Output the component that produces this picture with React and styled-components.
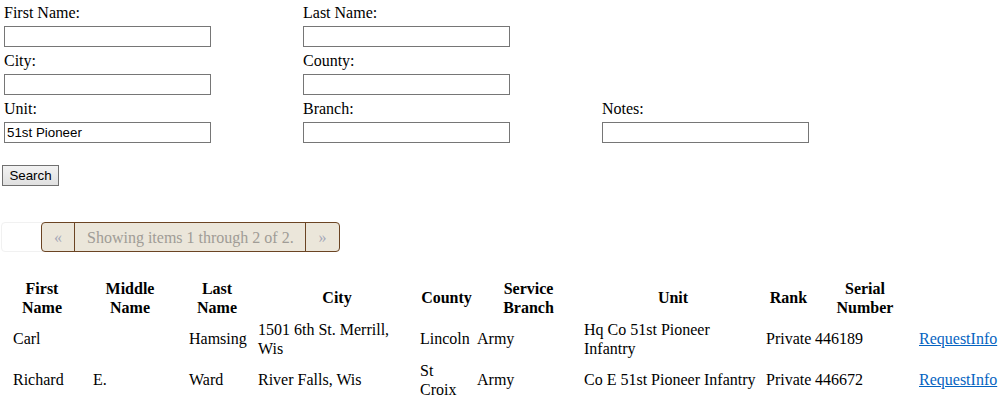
import React, { useState } from "react";
import styled, { createGlobalStyle } from "styled-components";

const GlobalStyle = createGlobalStyle`
  body {
    margin: 0;
    background: #fff;
    color: #000;
    font-family: "Liberation Serif", "Times New Roman", serif;
    font-size: 16px;
  }
`;

const columns = [
  { title: ["First", "Name"], width: 80 },
  { title: ["Middle", "Name"], width: 96 },
  { title: ["Last", "Name"], width: 78 },
  { title: ["City"], width: 162 },
  { title: ["County"], width: 57 },
  { title: ["Service", "Branch"], width: 107 },
  { title: ["Unit"], width: 182 },
  { title: ["Rank"], width: 49 },
  { title: ["Serial", "Number"], width: 104 },
  { title: [], width: 82 },
];

const soldiers = [
  {
    first: "Carl",
    middle: "",
    last: "Hamsing",
    city: "1501 6th St. Merrill, Wis",
    county: "Lincoln",
    branch: "Army",
    unit: "Hq Co 51st Pioneer Infantry",
    rank: "Private",
    serial: "446189",
  },
  {
    first: "Richard",
    middle: "E.",
    last: "Ward",
    city: "River Falls, Wis",
    county: "St Croix",
    branch: "Army",
    unit: "Co E 51st Pioneer Infantry",
    rank: "Private",
    serial: "446672",
  },
];

export default function App() {
  const [fields, setFields] = useState({
    first: "",
    last: "",
    city: "",
    county: "",
    unit: "51st Pioneer",
    branch: "",
    notes: "",
  });
  const update = (key) => (e) => setFields({ ...fields, [key]: e.target.value });

  return (
    <Page>
      <GlobalStyle />
      <Form onSubmit={(e) => e.preventDefault()}>
        <Field>
          <Label>First Name:</Label>
          <Input value={fields.first} onChange={update("first")} />
        </Field>
        <Field>
          <Label>Last Name:</Label>
          <Input value={fields.last} onChange={update("last")} />
        </Field>
        <Spacer />
        <Field>
          <Label>City:</Label>
          <Input value={fields.city} onChange={update("city")} />
        </Field>
        <Field>
          <Label>County:</Label>
          <Input value={fields.county} onChange={update("county")} />
        </Field>
        <Spacer />
        <Field>
          <Label>Unit:</Label>
          <Input value={fields.unit} onChange={update("unit")} />
        </Field>
        <Field>
          <Label>Branch:</Label>
          <Input value={fields.branch} onChange={update("branch")} />
        </Field>
        <Field>
          <Label>Notes:</Label>
          <Input value={fields.notes} onChange={update("notes")} />
        </Field>
      </Form>
      <SearchButton type="submit">Search</SearchButton>

      <PagerWrap>
        <Pager>
          <PageArrow>«</PageArrow>
          <PageInfo>Showing items 1 through 2 of 2.</PageInfo>
          <PageArrow last>»</PageArrow>
        </Pager>
      </PagerWrap>

      <Results>
        <colgroup>
          {columns.map((c, i) => (
            <col key={i} style={{ width: c.width }} />
          ))}
        </colgroup>
        <thead>
          <tr>
            {columns.map((c, i) => (
              <Th key={i}>
                {c.title.map((line, j) => (
                  <React.Fragment key={j}>
                    {j > 0 && <br />}
                    {line}
                  </React.Fragment>
                ))}
              </Th>
            ))}
          </tr>
        </thead>
        <tbody>
          {soldiers.map((s) => (
            <tr key={s.serial}>
              <Td indent>{s.first}</Td>
              <Td indent>{s.middle}</Td>
              <Td indent>{s.last}</Td>
              <Td>{s.city}</Td>
              <Td>{s.county}</Td>
              <Td>{s.branch}</Td>
              <Td>{s.unit}</Td>
              <Td>{s.rank}</Td>
              <Td>{s.serial}</Td>
              <Td>
                <Link href="#">RequestInfo</Link>
              </Td>
            </tr>
          ))}
        </tbody>
      </Results>
    </Page>
  );
}

const Page = styled.div`
  padding: 0 0 0 2px;
`;

const Form = styled.form`
  display: grid;
  grid-template-columns: 299px 299px 299px;
  row-gap: 5px;
  padding: 4px 0 0 2px;
`;

const Spacer = styled.div``;

const Field = styled.div`
  display: flex;
  flex-direction: column;
  gap: 4px;
`;

const Label = styled.label`
  display: block;
  height: 18px;
  line-height: 18px;
  font-size: 16px;
`;

const Input = styled.input`
  box-sizing: border-box;
  width: 207px;
  height: 21px;
  margin: 0;
  padding: 1px 2px;
  border: 1px solid #767676;
  font-family: "Liberation Sans", Arial, sans-serif;
  font-size: 13.33px;
  color: #000;
  background: #fff;
  outline: none;
`;

const SearchButton = styled.button`
  display: block;
  box-sizing: border-box;
  width: 57px;
  height: 21px;
  margin: 22px 0 0 0;
  padding: 0;
  border: 1px solid #707070;
  background: linear-gradient(#f2f2f2, #e0e0e0);
  font-family: "Liberation Sans", Arial, sans-serif;
  font-size: 13.33px;
  color: #000;
`;

const PagerWrap = styled.div`
  display: flex;
  width: fit-content;
  margin: 36px 0 0 -1px;
  padding-left: 39px;
  border: 1px solid #f1f1f1;
  border-radius: 4px;
`;

const Pager = styled.div`
  display: flex;
  margin: -1px -1px -1px 0;
  border: 1px solid #6b4423;
  border-radius: 4px;
  background: #ebe6da;
  color: #a09c96;
  font-size: 16px;
  line-height: 18px;
`;

const PageArrow = styled.span`
  box-sizing: border-box;
  width: ${(p) => (p.last ? "33px" : "32px")};
  padding: 6px 0 4px;
  text-align: center;
  color: #a6a8b8;
`;

const PageInfo = styled.span`
  box-sizing: border-box;
  width: 232px;
  padding: 6px 0 4px 12px;
  border-left: 1px solid #6b4423;
  border-right: 1px solid #6b4423;
  white-space: nowrap;
`;

const Results = styled.table`
  table-layout: fixed;
  width: 997px;
  margin-top: 26px;
  border-collapse: separate;
  border-spacing: 0;
  font-size: 16px;
  line-height: 18.5px;
`;

const Th = styled.th`
  padding: 2px 2px;
  font-weight: bold;
  text-align: center;
  vertical-align: middle;
`;

const Td = styled.td`
  padding: 2px 2px 2px ${(p) => (p.indent ? "11px" : "2px")};
  text-align: left;
  vertical-align: middle;
`;

const Link = styled.a`
  color: #0563c1;
  text-decoration: underline;
`;
